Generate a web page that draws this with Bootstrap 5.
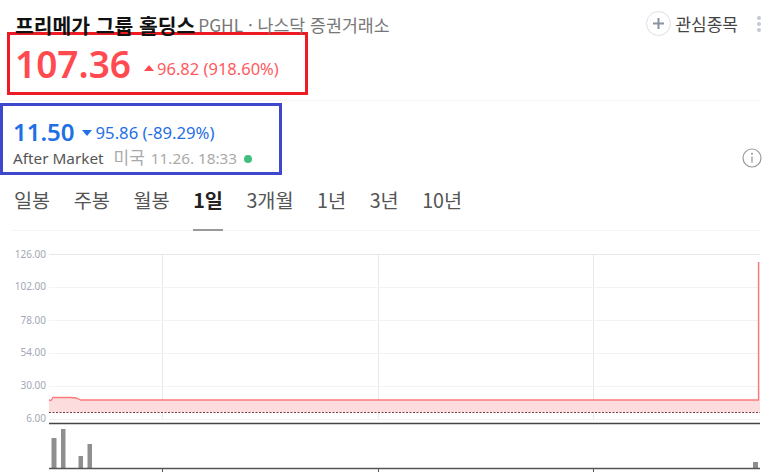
<!DOCTYPE html>
<html lang="ko">
<head>
    <meta charset="UTF-8">
    <meta name="viewport" content="width=device-width, initial-scale=1.0">
    <title>PGHL</title>
    <link href="https://cdn.jsdelivr.net/npm/bootstrap@5.3.0/dist/css/bootstrap.min.css" rel="stylesheet">
    <style>
        body { font-family: "Noto Sans", "Noto Sans CJK KR", sans-serif; background: #fff; overflow: hidden; height: 472px; }
        .stock-head { height: 32px; padding: 11px 12px 0 15px; }
        .stock-name { font-family: "Noto Sans CJK KR", sans-serif; font-size: 20.4px; font-weight: 700; color: #111; line-height: 28px; white-space: nowrap; }
        .stock-sub { font-family: "Noto Sans CJK KR", sans-serif; font-size: 17.3px; color: #777; line-height: 28px; margin-left: 3px; white-space: nowrap; }
        .watch-btn { width: 25px; height: 25px; border: 1px solid #dcdfe6; border-radius: 50%; }
        .watch-label { font-family: "Noto Sans CJK KR", sans-serif; font-size: 17px; color: #444; margin: 0 19px 0 4px; line-height: 24px; }
        .price-box { width: 301px; height: 63px; margin-left: 7px; border: 3px solid #ed1c24; padding-left: 5px; }
        .price-now { font-size: 37px; font-weight: 600; color: #ff4b4f; line-height: 1; }
        .price-diff { font-size: 16.5px; color: #ff5a5e; margin-left: 13px; margin-top: 12px; white-space: nowrap; }
        .caret-up { display: inline-block; border: 5px solid transparent; border-top: 0; border-bottom: 6px solid #ff4b4f; margin-right: 3px; vertical-align: 4px; }
        .split-line { height: 1px; background: #f4f4f4; margin-top: 5px; margin-right: 12px; }
        .after-wrap { height: 77px; padding-top: 2px; padding-right: 12px; }
        .after-box { width: 282px; height: 72px; border: 3px solid #3f48cc; padding: 12px 0 0 10px; }
        .after-now { font-size: 24px; font-weight: 600; color: #1f6fe5; line-height: 28px; }
        .after-diff { font-size: 16.7px; color: #1f6fe5; margin-left: 7px; white-space: nowrap; margin-top: 2px; }
        .caret-down { display: inline-block; border: 5px solid transparent; border-bottom: 0; border-top: 6px solid #1f6fe5; margin-right: 4px; vertical-align: 3px; }
        .after-label { font-size: 15.3px; color: #555; line-height: 22px; white-space: nowrap; }
        .after-time { color: #aaa; margin-left: 6px; }
        .after-time b { font-family: "Noto Sans CJK KR", sans-serif; font-size: 17px; font-weight: 400; margin-right: 2px; }
        .live-dot { display: inline-block; width: 8px; height: 8px; border-radius: 50%; background: #41bf7f; margin-left: 7px; vertical-align: 1px; }
        .info-icon { align-self: flex-end; margin-bottom: 10px; margin-right: -1px; }
        .range-tabs { height: 53px; margin: 0 12px; border-bottom: 1px solid #f4f4f4; gap: 23.5px; padding-left: 2px; flex-wrap: nowrap; }
        .range-tabs .nav-link { font-family: "Noto Sans CJK KR", sans-serif; font-size: 19.7px; color: #555; padding: 8px 0 0; height: 53px; line-height: 28px; white-space: nowrap; }
        .range-tabs .nav-link.active { color: #222; font-weight: 700; border-bottom: 2px solid #999; }
        .chart-area { display: block; margin-top: 9px; }
        .axis-label { font-family: "Noto Sans", sans-serif; font-size: 10px; fill: #a3a8b3; text-anchor: end; }
    </style>
</head>
<body>

<!-- Title row -->
<div class="stock-head d-flex align-items-start">
    <span class="stock-name">프리메가 그룹 홀딩스</span>
    <span class="stock-sub">PGHL · 나스닥 증권거래소</span>
    <div class="ms-auto d-flex align-items-center">
        <span class="watch-btn d-flex align-items-center justify-content-center">
            <svg width="13" height="13" viewBox="0 0 13 13"><path d="M6.5 1v11M1 6.5h11" stroke="#8a92a3" stroke-width="2"/></svg>
        </span>
        <span class="watch-label">관심종목</span>
        <svg width="4" height="16" viewBox="0 0 4 16" fill="#c3c8d3"><circle cx="2" cy="2" r="2"/><circle cx="2" cy="8" r="2"/><circle cx="2" cy="14" r="2"/></svg>
    </div>
</div>

<!-- Price -->
<div class="price-box d-flex align-items-center">
    <span class="price-now">107.36</span>
    <span class="price-diff"><span class="caret-up"></span>96.82 (918.60%)</span>
</div>
<div class="split-line"></div>

<!-- After market -->
<div class="after-wrap d-flex justify-content-between">
    <div class="after-box">
        <div class="d-flex align-items-center">
            <span class="after-now">11.50</span>
            <span class="after-diff"><span class="caret-down"></span>95.86 (-89.29%)</span>
        </div>
        <div class="after-label">After Market <span class="after-time"><b>미국</b> 11.26. 18:33</span><span class="live-dot"></span></div>
    </div>
    <svg class="info-icon" width="20" height="20" viewBox="0 0 20 20">
        <circle cx="10" cy="10" r="9" fill="none" stroke="#999" stroke-width="1.2"/>
        <path d="M10 8.5v6" stroke="#999" stroke-width="1.3"/>
        <circle cx="10" cy="5.8" r="1" fill="#999"/>
    </svg>
</div>

<!-- Range tabs -->
<ul class="nav range-tabs">
    <li class="nav-item"><a class="nav-link" href="#">일봉</a></li>
    <li class="nav-item"><a class="nav-link" href="#">주봉</a></li>
    <li class="nav-item"><a class="nav-link" href="#">월봉</a></li>
    <li class="nav-item"><a class="nav-link active" href="#">1일</a></li>
    <li class="nav-item"><a class="nav-link" href="#">3개월</a></li>
    <li class="nav-item"><a class="nav-link" href="#">1년</a></li>
    <li class="nav-item"><a class="nav-link" href="#">3년</a></li>
    <li class="nav-item"><a class="nav-link" href="#">10년</a></li>
</ul>

<!-- Chart -->
<svg class="chart-area" width="773" height="232" viewBox="0 240 773 232">
    <g stroke="#e8e8e8" stroke-width="1">
        <path d="M49 254.5H760"/>
        <path d="M162.5 254V419M378.5 254V419M593.5 254V419"/>
    </g>
    <g stroke="#f2f3f5" stroke-width="1">
        <path d="M49 287.5H760M49 320.5H760M49 353.5H760M49 386.5H760M49 419.5H760"/>
    </g>
    <text class="axis-label" x="46" y="258">126.00</text>
    <text class="axis-label" x="46" y="290">102.00</text>
    <text class="axis-label" x="46" y="324">78.00</text>
    <text class="axis-label" x="46" y="356">54.00</text>
    <text class="axis-label" x="46" y="389">30.00</text>
    <text class="axis-label" x="46" y="422">6.00</text>

    <path d="M49 400L51 400.5L53 397.5H70L76 398L81 400H758.5V262H760V412H49Z" fill="#fddcdd"/>
    <path d="M49 400L51 400.5L53 397.5H70L76 398L81 400H758.5V262" fill="none" stroke="#fb7a7d" stroke-width="1.3"/>
    <path d="M49 412.5H760" stroke="#6b3a3c" stroke-width="1" stroke-dasharray="2 1.5"/>

    <path d="M49 423.5H760" stroke="#444" stroke-width="1.3"/>
    <g fill="#8f8f8f">
        <rect x="51.5" y="438" width="5" height="30"/>
        <rect x="61" y="429" width="4.5" height="39"/>
        <rect x="78.5" y="456" width="4.5" height="12"/>
        <rect x="87.5" y="444" width="4.5" height="24"/>
        <rect x="753" y="462" width="5" height="6"/>
    </g>
    <path d="M49 468.5H760" stroke="#555" stroke-width="1.5"/>
    <path d="M162.5 469V472M378.5 469V472M593.5 469V472" stroke="#555"/>
</svg>

<script src="https://cdn.jsdelivr.net/npm/bootstrap@5.3.0/dist/js/bootstrap.bundle.min.js"></script>
</body>
</html>
